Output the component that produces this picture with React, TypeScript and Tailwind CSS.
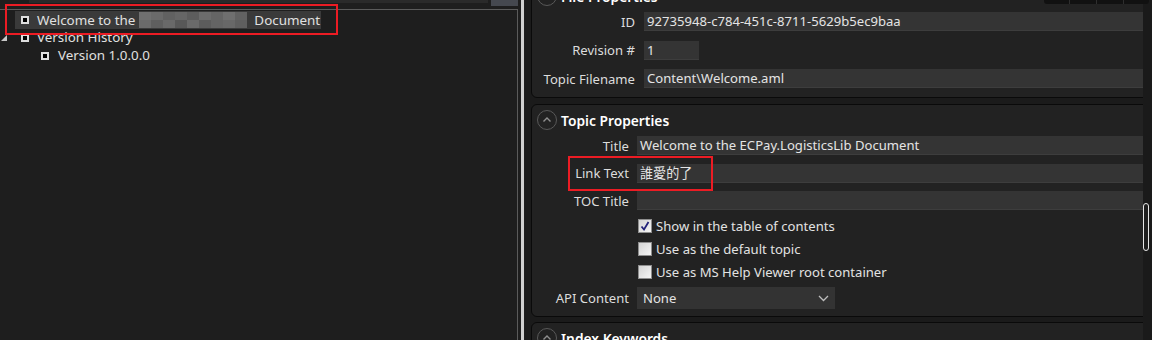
import React from "react";

const Circle = () => (
  <svg width="20" height="20" viewBox="0 0 20 20" className="shrink-0">
    <circle cx="10" cy="10" r="9.5" fill="none" stroke="#595959" />
    <path d="M6.5 11.5 L10 8 L13.5 11.5" fill="none" stroke="#8f8f8f" strokeWidth="1.4" />
  </svg>
);

const TreeBox = () => (
  <div className="w-[8px] h-[8px] border-2 border-[#dedede] bg-black shrink-0" />
);

const Check = ({ checked }: { checked?: boolean }) => (
  <div className="w-[14px] h-[14px] border border-[#8e8e8e] bg-gradient-to-br from-[#d4d4d4] to-[#f5f5f5] flex items-center justify-center shrink-0">
    {checked && (
      <svg width="12" height="12" viewBox="0 0 12 12">
        <path d="M2.5 6.5 L5 9.5 L9.5 2" fill="none" stroke="#23237a" strokeWidth="1.8" />
      </svg>
    )}
  </div>
);

const mosaic = [
  ["#707070", "#6a6a6a", "#616161", "#666666", "#5d5d5d", "#6c6c6c", "#656565", "#6f6f6f", "#626262"],
  ["#6b6b6b", "#5f5f5f", "#696969", "#585858", "#6a6a6a", "#5c5c5c", "#646464", "#686868", "#5f5f5f"],
];

function Field({ label, value, lw, gap, w }: { label: string; value?: string; lw: string; gap: string; w?: string }) {
  return (
    <div className="flex items-center h-[19px]">
      <div className={`${lw} text-right shrink-0 text-[#dcdcdc] pt-[2px]`}>{label}</div>
      <div className={`${gap} ${w ?? "flex-1"} h-full bg-[#343434] border-b border-[#3d3d3d] pl-[3px] pt-[2px] flex items-center text-[#e4e4e4] whitespace-nowrap`}>
        {value}
      </div>
    </div>
  );
}

export default function App() {
  return (
    <div className="relative w-[1152px] h-[340px] overflow-hidden flex bg-[#1e1e1e] text-[13.1px] leading-none font-['Noto_Sans','Noto_Sans_CJK_TC',sans-serif] text-[#e0e0e0]">
      {/* Left panel */}
      <div className="w-[518px] shrink-0 flex flex-col text-[13.4px]">
        <div className="flex h-[9px] shrink-0">
          <div className="ml-[29px] w-[459px] h-[3px] bg-[#2a2a2a]" />
          <div className="ml-[3px] w-[27px] h-[6px] bg-[#45484f] shrink-0" />
        </div>
        <div className="flex-1 border-t border-r border-[#5b5b5b] pt-[1px]">
          <div className="h-[18px] pl-[15px] flex">
            <div className="h-full bg-[#3a3a3a] flex items-center pl-[6px] pr-[1px]">
              <TreeBox />
              <span className="ml-[8px] pt-[2px]">Welcome to the</span>
              <div className="ml-[4px] flex flex-col">
                {mosaic.map((row, i) => (
                  <div key={i} className="flex">
                    {row.map((c, j) => (
                      <div key={j} className="w-[12px] h-[8px]" style={{ background: c }} />
                    ))}
                  </div>
                ))}
              </div>
              <span className="ml-[7px] pt-[2px]">Document</span>
            </div>
          </div>
          <div className="h-[18px] flex items-center">
            <svg width="8" height="8" viewBox="0 0 8 8" className="ml-[1px] shrink-0">
              <path d="M6 1 L6 7 L0 7 Z" fill="#c8c8c8" />
            </svg>
            <div className="ml-[12px]"><TreeBox /></div>
            <span className="ml-[8px]">Version History</span>
          </div>
          <div className="h-[18px] flex items-center pl-[41px]">
            <TreeBox />
            <span className="ml-[9px]">Version 1.0.0.0</span>
          </div>
        </div>
      </div>

      {/* Splitter */}
      <div className="w-[7px] shrink-0 flex bg-[#1e1e1e]">
        <div className="ml-[3px] w-[3px] h-full bg-[#d0d0d0]" />
      </div>

      {/* Right panel */}
      <div className="w-[618px] shrink-0 overflow-hidden bg-[#1b1b1b] pl-[6px]">
        {/* File Properties */}
        <div className="mt-[-20px] w-[660px] border border-[#0a0a0a] rounded-[6px] bg-[#222222] pt-[5px] pb-[9px] pr-[8px]">
          <div className="flex items-center h-[20px] pl-[5px] gap-[4px]">
            <Circle />
            <span className="font-semibold text-[13.8px] text-white pt-[2px]">File Properties</span>
          </div>
          <div className="mt-[6px] flex flex-col gap-[9.5px]">
            <Field label="ID" value="92735948-c784-451c-8711-5629b5ec9baa" lw="w-[103px]" gap="ml-[9px]" />
            <Field label="Revision #" value="1" lw="w-[103px]" gap="ml-[9px]" w="w-[55px]" />
            <Field label="Topic Filename" value="Content\Welcome.aml" lw="w-[103px]" gap="ml-[9px]" />
          </div>
        </div>

        {/* Topic Properties */}
        <div className="mt-[6px] w-[660px] border border-[#0a0a0a] rounded-[6px] bg-[#222222] pt-[5px] pb-[7px] pr-[8px]">
          <div className="flex items-center h-[20px] pl-[5px] gap-[4px]">
            <Circle />
            <span className="font-semibold text-[13.8px] text-white pt-[2px]">Topic Properties</span>
          </div>
          <div className="mt-[6px] flex flex-col gap-[8.5px]">
            <Field label="Title" value="Welcome to the ECPay.LogisticsLib Document" lw="w-[97px]" gap="ml-[8px]" />
            <Field label="Link Text" value="誰愛的了" lw="w-[97px]" gap="ml-[8px]" />
            <Field label="TOC Title" value="" lw="w-[97px]" gap="ml-[8px]" />
          </div>
          <div className="mt-[4.5px] pl-[106px] flex flex-col">
            {[
              { t: "Show in the table of contents", c: true },
              { t: "Use as the default topic" },
              { t: "Use as MS Help Viewer root container" },
            ].map((r) => (
              <div key={r.t} className="h-[23px] flex items-center">
                <Check checked={r.c} />
                <span className="ml-[4px] text-[#e2e2e2] pt-[2px]">{r.t}</span>
              </div>
            ))}
          </div>
          <div className="mt-[3.5px] flex items-center h-[22px]">
            <div className="w-[97px] text-right shrink-0 text-[#dcdcdc] pt-[2px]">API Content</div>
            <div className="ml-[8px] w-[198px] h-full bg-[#333333] flex items-center pl-[6px] pr-[6px] text-[#e4e4e4]">
              <span className="flex-1 pt-[2px]">None</span>
              <svg width="11" height="7" viewBox="0 0 11 7">
                <path d="M1 1 L5.5 5.5 L10 1" fill="none" stroke="#bdbdbd" strokeWidth="1.3" />
              </svg>
            </div>
          </div>
        </div>

        {/* Index Keywords */}
        <div className="mt-[5px] w-[660px] border border-[#0a0a0a] rounded-[6px] bg-[#222222] pt-[5px] pb-[20px]">
          <div className="flex items-center h-[20px] pl-[5px] gap-[4px]">
            <Circle />
            <span className="font-semibold text-[13.8px] text-white pt-[2px]">Index Keywords</span>
          </div>
        </div>
      </div>

      {/* Scrollbar */}
      <div className="w-[9px] shrink-0 bg-[#1a1a1a] pt-[203px]">
        <div className="w-[6px] h-[48px] rounded-full border border-[#e6e6e6] bg-[#1e1e1e]" />
      </div>

      {/* Floating toolbar stub */}
      <div className="absolute left-[1044px] top-0 w-[105px] h-[4px] bg-[#111111] rounded-b-[3px] flex">
        <div className="w-[26px] border-r border-[#2e2e2e]" />
        <div className="w-[27px] border-r border-[#2e2e2e]" />
        <div className="w-[27px] border-r border-[#2e2e2e]" />
      </div>

      {/* Annotation boxes */}
      <div className="absolute left-[5px] top-[4px] w-[333px] h-[31px] border-2 border-[#ec1c24]" />
      <div className="absolute left-[568px] top-[156px] w-[145px] h-[35px] border-2 border-[#ec1c24]" />
    </div>
  );
}
